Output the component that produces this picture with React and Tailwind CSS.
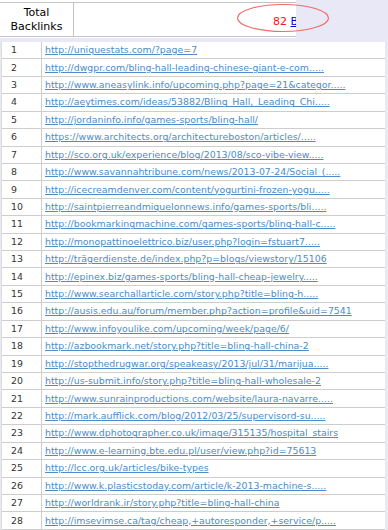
import { useState } from 'react'

const links = [
  'http://uniquestats.com/?page=7',
  'http://dwgpr.com/bling-hall-leading-chinese-giant-e-com.....',
  'http://www.aneasylink.info/upcoming.php?page=21&categor.....',
  'http://aeytimes.com/ideas/53882/Bling_Hall,_Leading_Chi.....',
  'http://jordaninfo.info/games-sports/bling-hall/',
  'https://www.architects.org/architectureboston/articles/.....',
  'http://sco.org.uk/experience/blog/2013/08/sco-vibe-view.....',
  'http://www.savannahtribune.com/news/2013-07-24/Social_(.....',
  'http://icecreamdenver.com/content/yogurtini-frozen-yogu.....',
  'http://saintpierreandmiquelonnews.info/games-sports/bli.....',
  'http://bookmarkingmachine.com/games-sports/bling-hall-c.....',
  'http://monopattinoelettrico.biz/user.php?login=fstuart7.....',
  'http://trägerdienste.de/index.php?p=blogs/viewstory/15106',
  'http://epinex.biz/games-sports/bling-hall-cheap-jewelry.....',
  'http://www.searchallarticle.com/story.php?title=bling-h.....',
  'http://ausis.edu.au/forum/member.php?action=profile&uid=7541',
  'http://www.infoyoulike.com/upcoming/week/page/6/',
  'http://azbookmark.net/story.php?title=bling-hall-china-2',
  'http://stopthedrugwar.org/speakeasy/2013/jul/31/marijua.....',
  'http://us-submit.info/story.php?title=bling-hall-wholesale-2',
  'http://www.sunrainproductions.com/website/laura-navarre.....',
  'http://mark.aufflick.com/blog/2012/03/25/supervisord-su.....',
  'http://www.dphotographer.co.uk/image/315135/hospital_stairs',
  'http://www.e-learning.bte.edu.pl/user/view.php?id=75613',
  'http://lcc.org.uk/articles/bike-types',
  'http://www.k.plasticstoday.com/article/k-2013-machine-s.....',
  'http://worldrank.ir/story.php?title=bling-hall-china',
  'http://imsevimse.ca/tag/cheap,+autoresponder,+service/p.....',
]

export default function App() {
  const [active, setActive] = useState(null)

  return (
    <div className="relative h-[530px] w-[388px] overflow-hidden bg-[#e8e8f6] font-['DejaVu_Sans',sans-serif]">
      {/* header table */}
      <div className="w-[296px] h-[38px] bg-white pt-[2px] overflow-hidden">
        <div className="flex h-[35px] border-y border-[#c4c4c4]">
          <div className="w-[73px] shrink-0 flex items-center justify-center text-center text-[11px] leading-[14px] text-black">
            Total<br />Backlinks
          </div>
          <div className="flex-1 border-l border-[#c4c4c4] flex items-center pl-[199px] pt-[5px] text-[11px] whitespace-nowrap overflow-hidden">
            <span className="text-[#ff1010]">82&nbsp;</span>
            <a href="#" className="text-[#0000ee] underline">Backlinks</a>
          </div>
        </div>
      </div>

      {/* ellipse marker */}
      <svg className="absolute left-[236px] top-[3px]" width="94" height="30" viewBox="0 0 94 30">
        <ellipse cx="47" cy="15" rx="45.5" ry="13.5" fill="none" stroke="#f26a6a" strokeWidth="1.2" />
      </svg>

      {/* list of backlinks */}
      <div className="mt-[4px] ml-[1px] w-[384px] bg-white border-l border-[#dcdcdc]">
        {links.map((url, i) => (
          <div
            key={i}
            className="flex h-[17.43px] border-b border-[#cdcdcd] items-center"
            onMouseEnter={() => setActive(i)}
            onMouseLeave={() => setActive(null)}
          >
            <div className="w-[40px] shrink-0 pl-[9px] text-[9.4px] text-[#333] self-stretch flex items-center border-r border-[#cdcdcd]">
              {i + 1}
            </div>
            <a
              href="#"
              className={'pl-[3px] text-[9.4px] whitespace-nowrap underline ' + (active === i ? 'text-[#2a6db5]' : 'text-[#4a8ccc]')}
            >
              {url}
            </a>
          </div>
        ))}
      </div>
    </div>
  )
}
